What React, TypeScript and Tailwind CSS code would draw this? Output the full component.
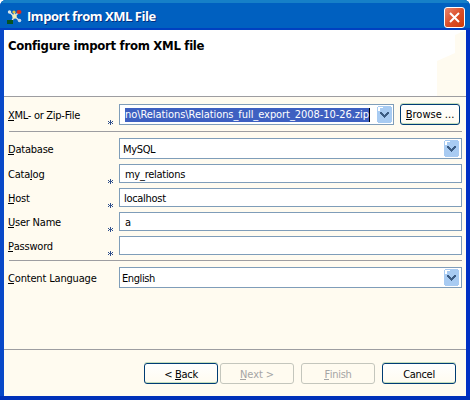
import React from "react";

const U = ({ children }: { children: React.ReactNode }) => (
  <span className="relative">
    {children}
    <span className="absolute left-0 right-px bottom-px h-px bg-current" />
  </span>
);

const Arrow = () => (
  <svg width="16" height="18" viewBox="0 0 16 18" className="shrink-0" shapeRendering="crispEdges">
    <path d="M0 1h1v-1h13v1h1v15h-1v1H1v-1H0z" fill="#a8cbf2" />
    <path d="M1 1h5v1H3v3H1z" fill="#fff" />
    <path d="M3 6h2v1h1v1h1v1h1v-1h1v-1h1v-1h2v2h-1v1h-1v1h-1v1h-1v1h-1v-1h-1v-1h-1v-1h-1v-1h-1z" fill="#3c5c83" />
  </svg>
);

const Label = ({ children, required, tracking = "pt-[2px] tracking-[-0.22px]" }: { children: React.ReactNode; required?: boolean; tracking?: string }) => (
  <div className="flex h-[19px] w-[111px] shrink-0 items-center justify-between whitespace-nowrap pr-[6px]">
    <span className={`leading-[15px] ${tracking}`}>{children}</span>
    {required && (
      <svg width="5" height="5" viewBox="0 0 5 5" className="mt-[15px]" shapeRendering="crispEdges">
        <path d="M2 0h1v5H2zM0 1h1v1H0zM4 1h1v1H4zM1 2h3v1H1zM0 3h1v1H0zM4 3h1v1H4z" fill="#2f4f8c" />
      </svg>
    )}
  </div>
);

const Field = ({ children, combo, tracking = "tracking-[-0.27px]" }: { children?: React.ReactNode; combo?: boolean; tracking?: string }) => (
  <div className={`flex flex-1 items-center justify-between border border-[#7f9db9] bg-white pr-px ${combo ? "h-[21px] pl-[3px]" : "h-[19px] pl-[5px]"}`}>
    <span className={`whitespace-nowrap pt-[2px] leading-[15px] ${tracking}`}>{children}</span>
    {combo && <Arrow />}
  </div>
);

const Button = ({ children, disabled, className }: { children: React.ReactNode; disabled?: boolean; className: string }) => (
  <button
    className={`flex h-[21px] items-center justify-center whitespace-nowrap rounded-[3px] border leading-[15px] ${
      disabled ? "border-[#c4c6bd] text-[#a5a5a5]" : "border-[#003c74] bg-linear-to-b from-white to-[#fffbf0] shadow-[0_-1px_0_#c5dfbd,inset_0_-1px_0_#c5dfbd]"
    } ${className}`}
  >
    {children}
  </button>
);

export default function App() {
  return (
    <div className="flex h-[400px] w-[470px] flex-col overflow-hidden rounded-t-[6px] bg-[#0038c7] font-['DejaVu_Sans_Condensed','DejaVu_Sans',sans-serif] text-[11px] text-black [font-stretch:condensed]">
      <header className="flex h-[30px] shrink-0 items-center border-b-2 border-t-[3px] border-b-[#0040c0] border-t-[#1680c8] bg-[#0060c0] pl-[7px] pr-[5px]">
        <svg width="15" height="15" viewBox="0 0 15 15" className="mt-[2px]">
          <path d="M2.500 3l4.500 4.500L5 12M12 3L7.500 7.500l5 4M7.500 7.500V3" stroke="#d8dfdf" strokeWidth="1.500" fill="none" />
          <circle cx="2.500" cy="3" r="1.700" fill="#d9e5e8" />
          <circle cx="7.500" cy="7.500" r="2.200" fill="#f1edb5" />
          <circle cx="7" cy="3" r="1.600" fill="#e6c33d" />
          <ellipse cx="12" cy="3" rx="2.500" ry="2" fill="#da2c20" />
          <circle cx="12.500" cy="11.500" r="1.800" fill="#c5d6e8" />
          <path d="M0 11h6v4H0z" fill="#075321" />
        </svg>
        <span className="ml-[5px] mt-[2px] whitespace-nowrap font-['Open_Sans',sans-serif] text-[13px] font-bold tracking-[-0.45px] text-white [font-stretch:normal] [text-shadow:1px_1px_0_#003080]">Import from XML File</span>
        <button className="ml-auto mt-1 flex h-[21px] w-[21px] items-center justify-center rounded-[3px] border border-white bg-linear-to-br from-[#e8836a] via-[#dc4f29] to-[#d03a00]">
          <svg width="11" height="11" viewBox="0 0 11 11"><path d="M1 1l9 9M10 1l-9 9" stroke="white" strokeWidth="2" /></svg>
        </button>
      </header>
      <div className="flex h-[366px] flex-col border-x-4 border-l-[#0848c8] border-r-[#0030c4] bg-[#fffbf0]">
        <section className="flex h-[67px] shrink-0 justify-between border-b border-[#9d9da1] bg-white pl-1">
          <h1 className="mt-[7px] whitespace-nowrap text-[13px] font-bold leading-[18px] tracking-[-0.29px]">Configure import from XML file</h1>
          <svg width="29" height="66" viewBox="0 0 29 66"><path d="M29 0L18 5V23L0 31V66H29Z" fill="#fffbf0" /></svg>
        </section>
        <main className="flex h-[252px] shrink-0 flex-col px-[4px] pt-[7px]">
          <div className="flex h-[21px] items-center">
            <Label required tracking="pt-px tracking-[-0.28px]"><U>X</U>ML- or Zip-File</Label>
            <div className="flex h-[21px] w-[275px] items-center justify-between border border-[#7f9db9] bg-white pl-[5px]">
              <span className="h-[14px] whitespace-nowrap border-r border-black bg-[#3e60c1] leading-[14px] tracking-[-0.06px] text-white">no\Relations\Relations_full_export_2008-10-26.zip</span>
              <Arrow />
            </div>
            <Button className="ml-[6px] w-[60px]"><span><U>B</U>rowse ...</span></Button>
          </div>
          <hr className="ml-px mt-[6px] border-[#9d9da1]" />
          <div className="mt-[6px] flex items-center"><Label><U>D</U>atabase</Label><Field combo tracking="tracking-[-0.35px]">MySQL</Field></div>
          <div className="mt-[5px] flex"><Label required>Cata<U>l</U>og</Label><Field>my_relations</Field></div>
          <div className="mt-[5px] flex"><Label required><U>H</U>ost</Label><Field tracking="ml-[-1px] tracking-[-0.3px]">localhost</Field></div>
          <div className="mt-[5px] flex"><Label required><U>U</U>ser Name</Label><Field>a</Field></div>
          <div className="mt-[5px] flex"><Label required><U>P</U>assword</Label><Field /></div>
          <hr className="ml-px mt-[5px] border-[#9d9da1]" />
          <div className="mt-[6px] flex items-center"><Label tracking="pt-[2px] tracking-[-0.17px]"><U>C</U>ontent Language</Label><Field combo tracking="ml-[-1px] tracking-[-0.4px]">English</Field></div>
        </main>
        <footer className="flex flex-1 justify-end border-t border-[#9d9da1] pr-[10px] pt-[13px]">
          <Button className="w-[74px] pt-[2px] tracking-[-0.3px]"><span>&lt; <U>B</U>ack</span></Button>
          <Button disabled className="ml-[2px] w-[74px] pt-[2px] tracking-[-0.1px]"><span><U>N</U>ext &gt;</span></Button>
          <Button disabled className="ml-[7px] w-[74px] pt-[2px] tracking-[-0.3px]"><span><U>F</U>inish</span></Button>
          <Button className="ml-[7px] w-[74px] pt-[2px] tracking-[-0.3px]">Cancel</Button>
        </footer>
      </div>
      <div className="h-1 shrink-0 bg-[#0030b8]" />
    </div>
  );
}
